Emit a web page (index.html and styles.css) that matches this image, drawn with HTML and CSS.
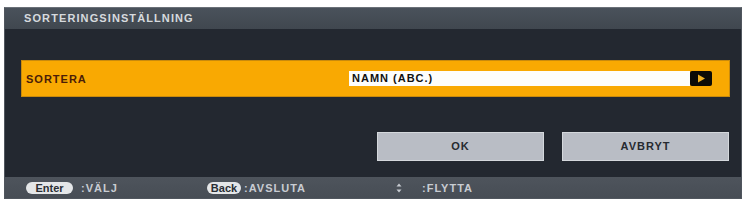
FILE: index.html
```html
<!DOCTYPE html>
<html lang="sv">
<head>
    <meta charset="UTF-8">
    <title>Sorteringsinställning</title>
    <link rel="stylesheet" href="styles.css">
</head>
<body>
    <div class="dialog">
        <div class="title-bar">SORTERINGSINSTÄLLNING</div>

        <div class="content">
            <div class="option-row">
                <span class="option-label">SORTERA</span>
                <div class="option-value">NAMN (ABC.)</div>
                <span class="option-arrow">
                    <svg width="9" height="9" viewBox="0 0 9 9"><path d="M1 0.5 L8 4.5 L1 8.5 Z" fill="#f0b020"/></svg>
                </span>
            </div>

            <div class="buttons">
                <div class="btn">OK</div>
                <div class="btn">AVBRYT</div>
            </div>
        </div>

        <div class="footer">
            <div class="hint hint-enter">
                <span class="key key-enter">Enter</span>
                <span>:VÄLJ</span>
            </div>
            <div class="hint hint-back">
                <span class="key key-back">Back</span>
                <span>:AVSLUTA</span>
            </div>
            <div class="hint">
                <svg class="updown" width="6" height="10" viewBox="0 0 6 10"><path d="M3 0.5 L5.5 3.5 L0.5 3.5 Z M3 9.5 L5.5 6.5 L0.5 6.5 Z" fill="#c8ccd2"/></svg>
                <span>:FLYTTA</span>
            </div>
        </div>
    </div>
</body>
</html>
```

FILE: styles.css
```css
body {
    margin: 0;
    background: #ffffff;
    font-family: 'Liberation Sans', Arial, sans-serif;
}

.dialog {
    margin: 7px 0 0 4px;
    width: 736px;
    height: 190px;
    background: #232830;
    border: 1px solid #50565e;
    border-top-color: #6a7078;
    display: flex;
    flex-direction: column;
}

.title-bar {
    height: 21px;
    line-height: 21px;
    padding-left: 19px;
    background: linear-gradient(#4a525b, #40474f);
    color: #d6dade;
    font-size: 11px;
    font-weight: bold;
    letter-spacing: 1.1px;
}

.content {
    flex: 1;
    padding: 31px 11px 0 16px;
}

.option-row {
    height: 35px;
    display: flex;
    align-items: center;
    padding: 0 17px 0 4px;
    background: #f9a902;
    border: 1px solid #c98a0c;
}

.option-label {
    flex: 1;
    color: #4b1d08;
    font-size: 11px;
    font-weight: bold;
    letter-spacing: 1px;
}

.option-value {
    width: 338px;
    height: 15px;
    line-height: 15px;
    padding-left: 3px;
    background: #fdfdfb;
    color: #111111;
    font-size: 11px;
    font-weight: bold;
    letter-spacing: 1px;
}

.option-arrow {
    width: 22px;
    height: 15px;
    display: inline-flex;
    align-items: center;
    justify-content: center;
    background: #0c0a06;
    border-radius: 2px;
}

.buttons {
    display: flex;
    justify-content: flex-end;
    gap: 18px;
    margin-top: 35px;
    padding-right: 1px;
}

.btn {
    width: 165px;
    height: 27px;
    line-height: 27px;
    text-align: center;
    background: #b9bdc5;
    border: 1px solid #d4d8dc;
    color: #262a30;
    font-size: 11px;
    font-weight: bold;
    letter-spacing: 1px;
}

.footer {
    height: 21px;
    display: flex;
    align-items: center;
    padding-left: 21px;
    background: linear-gradient(#4e545c, #474d55);
    color: #c8ccd2;
    font-size: 11px;
    font-weight: bold;
    letter-spacing: 1px;
}

.hint {
    display: flex;
    align-items: center;
    gap: 8px;
}

.hint-enter {
    width: 181px;
}

.hint-back {
    width: 189px;
    gap: 3px;
}

.key {
    height: 12px;
    line-height: 12px;
    text-align: center;
    border-radius: 6px;
    background: #e4e6e8;
    color: #2a2e34;
    font-size: 11px;
    font-weight: bold;
    letter-spacing: 0;
}

.key-enter {
    width: 47px;
}

.key-back {
    width: 34px;
}

.updown {
    margin-right: 12px;
}
```
